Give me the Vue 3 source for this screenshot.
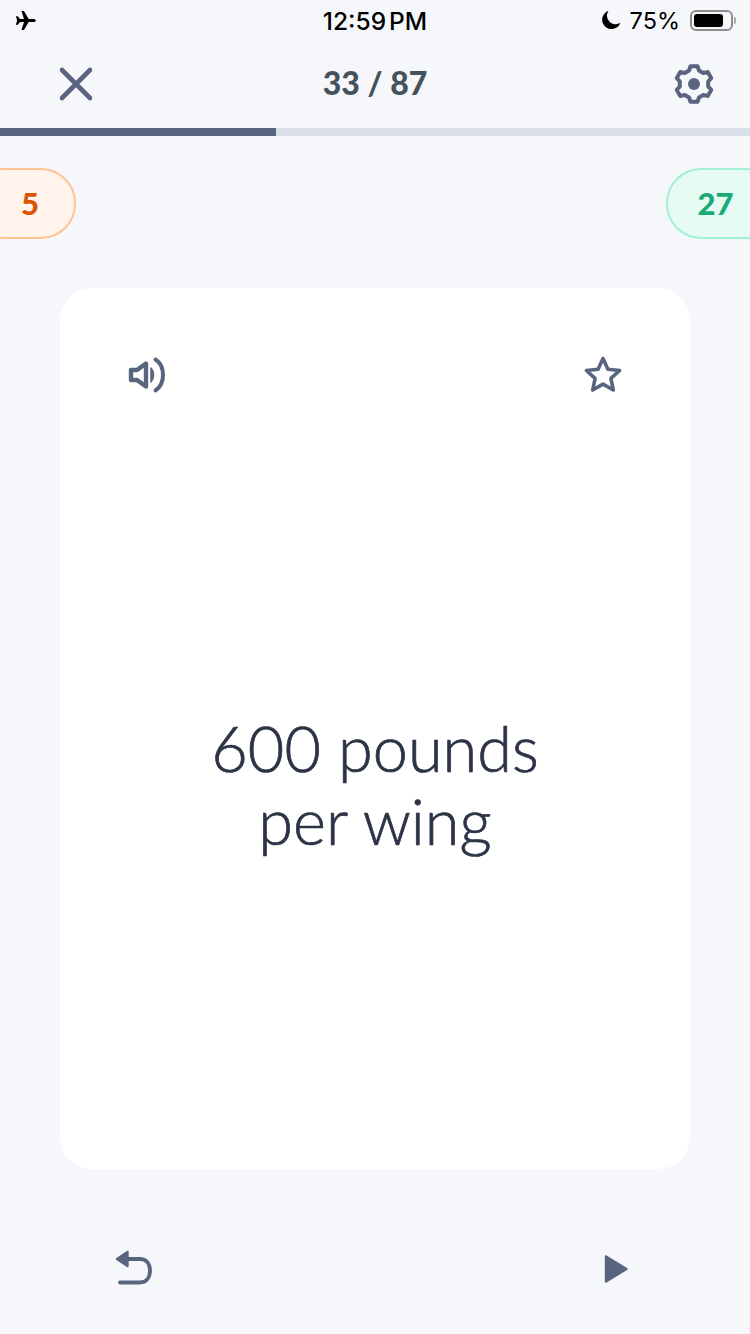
<script setup>
const gearPath = (() => {
  const pts = []
  const pol = (r, d) => {
    const a = (d * Math.PI) / 180
    return `${(22 + r * Math.cos(a)).toFixed(2)} ${(22 + r * Math.sin(a)).toFixed(2)}`
  }
  for (let k = 0; k < 6; k++) {
    const c = -90 + 60 * k
    pts.push(pol(18.2, c - 11), pol(18.2, c + 11), pol(14.4, c + 20), pol(14.4, c + 40))
  }
  return 'M' + pts.join('L') + 'Z'
})()
</script>

<template>
  <div class="page">
    <header class="status">
      <svg class="plane" width="21" height="21" viewBox="0 0 22 22">
        <path d="M1 6.5 3 6.5 5.2 9.4 9.4 9.4 6.8 1 9.4 1 14.3 9.3 19 9.3C20.6 9.3 21.8 10 21.8 11S20.6 12.7 19 12.7L14.3 12.7 9.4 21 6.8 21 9.4 12.6 5.2 12.6 3 15.5 1 15.5 2.2 11Z" fill="#000"/>
      </svg>
      <span class="time">12:59<span class="pm">PM</span></span>
      <div class="status-right">
        <svg width="20" height="20" viewBox="0 0 20 20">
          <path d="M7.5 .8A9.4 9.4 0 1 0 19.4 12.8 8.6 8.6 0 0 1 7.5 .8Z" fill="#000"/>
        </svg>
        <span class="pct">75%</span>
        <div class="battery"><div class="battery-fill"></div></div>
        <div class="battery-tip"></div>
      </div>
    </header>

    <nav class="nav">
      <svg class="nav-x" width="36" height="36" viewBox="0 0 36 36">
        <path d="M4 4 32 32M32 4 4 32" fill="none" stroke="#59647f" stroke-width="4.6" stroke-linecap="round"/>
      </svg>
      <span class="count">33 / 87</span>
      <svg width="44" height="44" viewBox="0 0 44 44">
        <path :d="gearPath" fill="none" stroke="#59647f" stroke-width="4" stroke-linejoin="round"/>
        <circle cx="22" cy="22" r="6" fill="#59647f"/>
      </svg>
    </nav>

    <div class="progress"><div class="progress-fill"></div></div>

    <div class="scores">
      <div class="pill pill-left">5</div>
      <div class="pill pill-right">27</div>
    </div>

    <main class="card">
      <div class="card-top">
        <svg width="38" height="38" viewBox="0 0 38 38">
          <path d="M3 14H9L18 7.5V30.5L9 24H3Z" fill="none" stroke="#59647f" stroke-width="4.4" stroke-linejoin="round"/>
          <path d="M23 12C26.4 15.5 26.4 22.5 23 26Z" fill="#59647f" stroke="#59647f" stroke-width="1.5" stroke-linejoin="round"/>
          <path d="M27.5 3.5C37.5 10 37.5 28 27.5 34.5" fill="none" stroke="#59647f" stroke-width="4" stroke-linecap="round"/>
        </svg>
        <svg width="40" height="40" viewBox="0 0 40 40">
          <path d="M20 3.5 24.9 14.2 36.6 15.5 27.9 23.4 30.3 35 20 29.1 9.7 35 12.1 23.4 3.4 15.5 15.1 14.2Z" fill="none" stroke="#59647f" stroke-width="3.6" stroke-linejoin="round"/>
        </svg>
      </div>
      <div class="card-text">600 pounds<br>per wing</div>
    </main>

    <footer class="bottom">
      <svg width="40" height="40" viewBox="0 0 40 40">
        <path d="M9 10H26C32 10 36 14 36 21.5S32 33.5 26 33.5H6" fill="none" stroke="#59647f" stroke-width="3.8" stroke-linecap="round"/>
        <path d="M13.5 3 3 10 13.5 17Z" fill="#59647f" stroke="#59647f" stroke-width="2.4" stroke-linejoin="round"/>
      </svg>
      <svg width="26" height="32" viewBox="0 0 26 32">
        <path d="M3 3.5 23.5 16 3 28.5Z" fill="#59647f" stroke="#59647f" stroke-width="2.4" stroke-linejoin="round"/>
      </svg>
    </footer>
  </div>
</template>

<style>
html, body { margin: 0; background: #f6f7fb; }
</style>

<style scoped>
.page {
  width: 750px;
  height: 1334px;
  overflow: hidden;
  background: #f6f7fb;
  display: flex;
  flex-direction: column;
  font-family: Lato, "Noto Sans", sans-serif;
}
.status {
  height: 40px;
  display: flex;
  align-items: center;
  justify-content: space-between;
  padding: 0 14px 0 15px;
  position: relative;
  font-family: Inter, sans-serif;
  color: #000;
}
.plane { flex: none; }
.time {
  position: absolute;
  left: 0;
  right: 0;
  text-align: center;
  font-size: 24.5px;
  font-weight: 500;
  line-height: 40px;
  margin-top: 1px;
}
.pm { margin-left: 3px; }
.status-right {
  display: flex;
  align-items: center;
  position: relative;
}
.pct {
  font-size: 23.5px;
  font-weight: 400;
  margin: 1px 10px 0 9px;
  line-height: 40px;
}
.battery {
  width: 43px;
  height: 21px;
  box-sizing: border-box;
  border: 2px solid #8e8e8e;
  border-radius: 6px;
  padding: 2px;
}
.battery-fill {
  width: 29px;
  height: 13px;
  background: #000;
  border-radius: 3px;
}
.battery-tip {
  width: 2px;
  height: 7px;
  margin-left: 1px;
  background: #a8a8a8;
  border-radius: 0 2px 2px 0;
}
.nav {
  height: 88px;
  display: flex;
  align-items: center;
  justify-content: space-between;
  padding: 0 34px 0 58px;
  position: relative;
}
.count {
  position: absolute;
  left: 0;
  right: 0;
  text-align: center;
  font-size: 32px;
  font-weight: 900;
  color: #46525a;
  margin-top: -3px;
  pointer-events: none;
}
.progress {
  height: 8px;
  background: #d9dee9;
  flex: none;
}
.progress-fill {
  width: 276px;
  height: 100%;
  background: #59647f;
}
.scores {
  display: flex;
  justify-content: space-between;
  margin: 32px -30px 0;
}
.pill {
  height: 71px;
  box-sizing: border-box;
  border-radius: 35px;
  border: 2px solid;
  display: flex;
  align-items: center;
  justify-content: center;
  padding-bottom: 2px;
  font-size: 31px;
  font-weight: 900;
}
.pill-left {
  width: 106px;
  padding-left: 14px;
  background: #fff3ec;
  border-color: #fdc390;
  color: #d95500;
}
.pill-right {
  width: 114px;
  padding-right: 15px;
  background: #e6fbf3;
  border-color: #a0f0d2;
  color: #18ab76;
}
.card {
  width: 630px;
  height: 881px;
  margin: 49px auto 0;
  background: #fff;
  border-radius: 32px;
  position: relative;
  display: flex;
  flex-direction: column;
}
.card-top {
  display: flex;
  justify-content: space-between;
  align-items: center;
  padding: 67px 67px 0 68px;
}
.card-text {
  position: absolute;
  left: 0;
  right: 0;
  top: 423px;
  text-align: center;
  font-size: 63px;
  line-height: 73px;
  font-weight: 300;
  -webkit-text-stroke: 0.7px #2c3347;
  color: #2c3347;
}
.bottom {
  display: flex;
  justify-content: space-between;
  align-items: center;
  padding: 80px 121px 0 114px;
}
</style>
